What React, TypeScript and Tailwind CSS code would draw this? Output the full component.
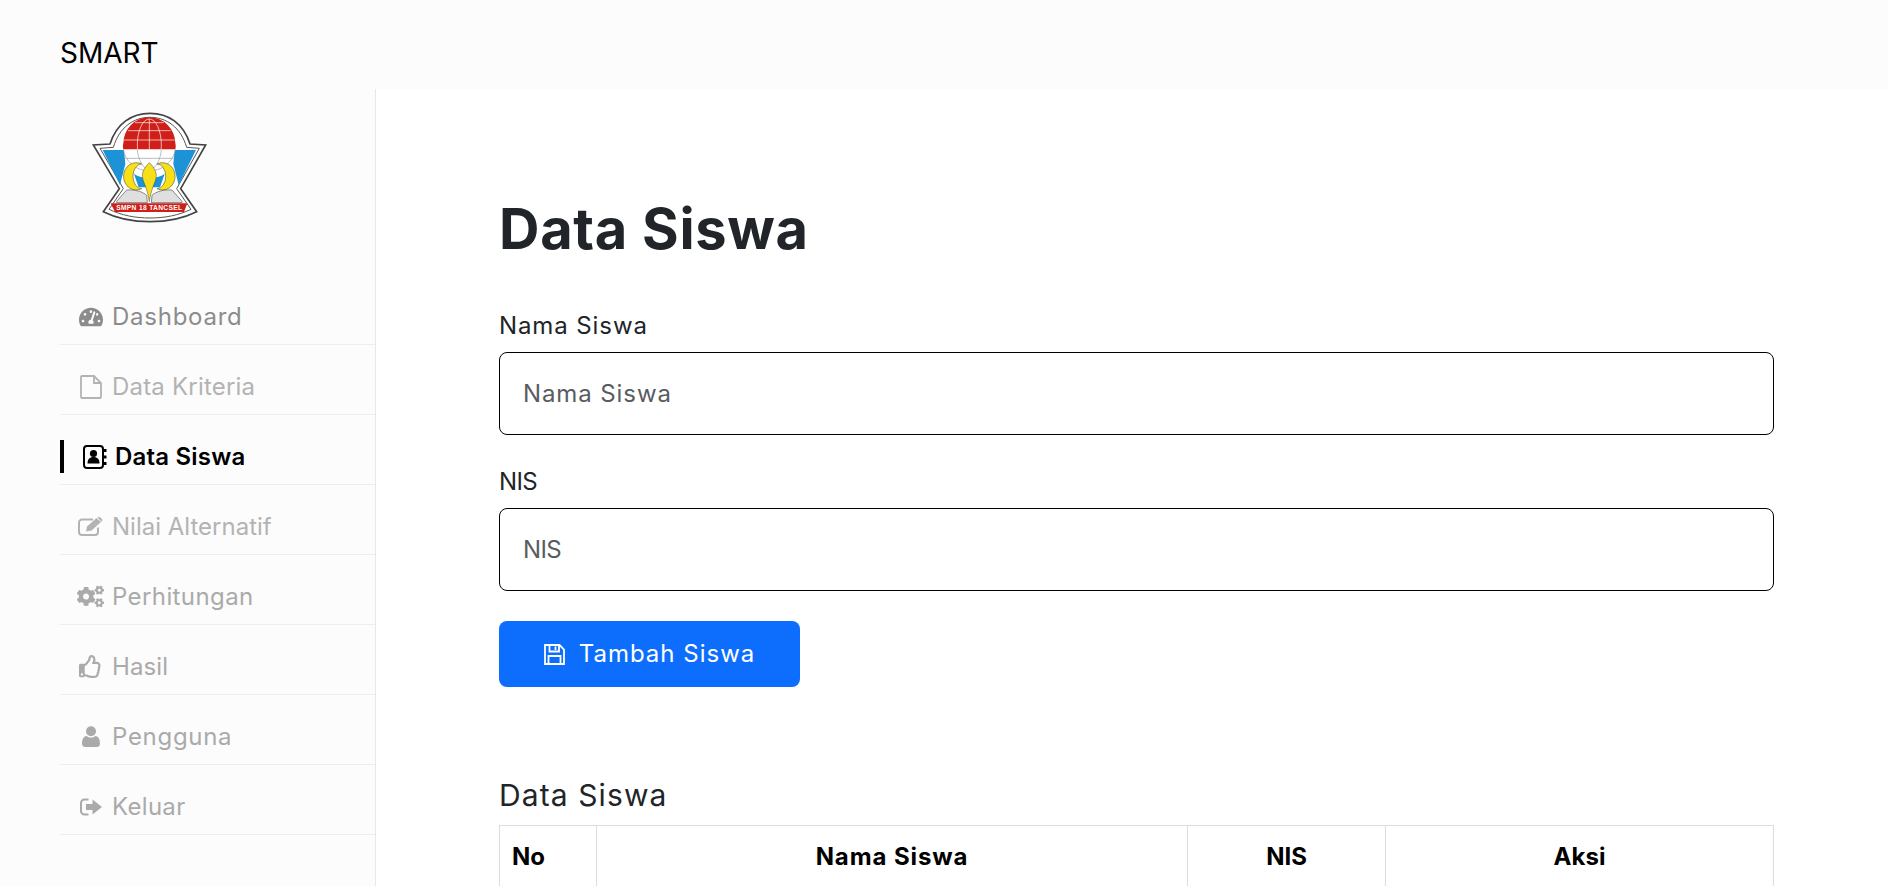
import { FaTachometerAlt, FaRegThumbsUp, FaCogs } from "react-icons/fa"

type IconProps = { className?: string }

function FileIcon({ className }: IconProps) {
  return (
    <svg viewBox="0 0 22 24" className={className} fill="none" stroke="currentColor" strokeWidth="1.8">
      <path d="M1 2a1 1 0 0 1 1-1h12l7 7v14a1 1 0 0 1-1 1H2a1 1 0 0 1-1-1z" />
      <path d="M14 1v7h7" />
    </svg>
  )
}

function AddressBookIcon({ className }: IconProps) {
  return (
    <svg viewBox="0 0 24 24" className={className} fill="currentColor">
      <rect x="1" y="1" width="19" height="22" rx="3" fill="none" stroke="currentColor" strokeWidth="2" />
      <circle cx="10.5" cy="8.5" r="3.6" />
      <path d="M4.5 18.5c0-4.2 2-6.5 6-6.5s6 2.3 6 6.5z" />
      <rect x="21" y="4" width="2.5" height="3" />
      <rect x="21" y="10.5" width="2.5" height="3" />
      <rect x="21" y="17" width="2.5" height="3" />
    </svg>
  )
}

function EditIcon({ className }: IconProps) {
  return (
    <svg viewBox="0 0 25 19" className={className} fill="currentColor">
      <path d="M15 2.5H4a3 3 0 0 0-3 3V15a3 3 0 0 0 3 3h13a3 3 0 0 0 3-3v-4.5" fill="none" stroke="currentColor" strokeWidth="2" />
      <path d="M8 14.5l1-5L18.5 1l4.5 4-9.5 8.5z" />
      <path d="M19.5.5l1-.5a1.5 1.5 0 0 1 1.5.3l2 1.8a1.5 1.5 0 0 1 0 1.9l-.5.7z" />
    </svg>
  )
}

function UserIcon({ className }: IconProps) {
  return (
    <svg viewBox="0 0 18 21" className={className} fill="currentColor">
      <circle cx="9" cy="5.2" r="5" />
      <path d="M0 17.5c0-4.5 1.800-7.500 4.800-7.500 1.100 1 2.600 1.700 4.200 1.700s3.100-.7 4.200-1.700c3 0 4.800 3 4.800 7.500 0 2.200-1.300 3.500-3 3.500H3c-1.700 0-3-1.300-3-3.500z" />
    </svg>
  )
}

function SignOutIcon({ className }: IconProps) {
  return (
    <svg viewBox="0 0 22 18" className={className} fill="currentColor">
      <path d="M8.500 1.500H4.500a3.500 3.500 0 0 0-3.500 3.500v8a3.500 3.500 0 0 0 3.500 3.500h4" fill="none" stroke="currentColor" strokeWidth="2" />
      <path d="M6 6h6.500V1.500L22 9l-9.500 7.500V12H6z" />
    </svg>
  )
}

function SaveIcon({ className }: IconProps) {
  return (
    <svg viewBox="0 0 21 21" className={className} fill="none" stroke="currentColor" strokeWidth="1.800">
      <path d="M1 1h14.500L20 5.500V20H1z" />
      <path d="M5.500 1v6.500H15V1" />
      <path d="M11.500 2.500v3.500" />
      <path d="M4.500 20v-8h12v8" />
    </svg>
  )
}

const menu = [
  { label: "Dashboard", icon: FaTachometerAlt, size: "w-[24px] h-[24px]", color: "text-[#8c8c8c]", spacing: "tracking-[0.75px]" },
  { label: "Data Kriteria", icon: FileIcon, size: "w-[22px] h-[24px]", color: "text-[#b3b3b3]", spacing: "tracking-[0.2px]" },
  { label: "Data Siswa", icon: AddressBookIcon, size: "w-[24px] h-[24px]", active: true },
  { label: "Nilai Alternatif", icon: EditIcon, size: "w-[25px] h-[19px]", color: "text-[#b3b3b3]", spacing: "tracking-[0px]" },
  { label: "Perhitungan", icon: FaCogs, size: "w-[27px] h-[27px]", color: "text-[#aaaaaa]", spacing: "tracking-[0.4px]" },
  { label: "Hasil", icon: FaRegThumbsUp, size: "w-[23px] h-[23px]", color: "text-[#aaaaaa]", spacing: "tracking-[0.1px]" },
  { label: "Pengguna", icon: UserIcon, size: "w-[18px] h-[21px]", color: "text-[#aaaaaa]", spacing: "tracking-[0.7px]" },
  { label: "Keluar", icon: SignOutIcon, size: "w-[22px] h-[18px]", color: "text-[#aaaaaa]", spacing: "tracking-[0.3px]" },
]

function Logo() {
  return (
    <svg viewBox="0 0 540 450" className="w-[180px] h-[150px] mt-[1px] block">
      {/* shield outline */}
      <path d="M150 162 C170 100 215 70 270 70 C325 70 370 100 390 162 L437 165 L362 296 L410 365 C370 385 320 395 270 395 C220 395 170 385 130 365 L178 296 L100 165 Z" fill="#fff" stroke="#444" strokeWidth="5" />
      <path d="M160 172 C178 112 220 82 270 82 C320 82 362 112 380 172 L418 175 L350 296 L393 358 C355 376 315 384 270 384 C225 384 185 376 147 358 L190 296 L120 175 Z" fill="#fff" stroke="#555" strokeWidth="3" />
      {/* blue wings */}
      <path d="M128 180 L192 180 L196 222 L180 285 Z" fill="#1c93d6" />
      <path d="M408 180 L344 180 L340 222 L356 285 Z" fill="#1c93d6" />
      {/* globe */}
      <circle cx="268" cy="165" r="78" fill="#fff" />
      <path d="M190 178 C188 170 189 165 190 160 A78 78 0 0 1 346 160 C347 165 348 170 346 178 Z" fill="#cf1f18" />
      <g fill="none" stroke="#fff" strokeWidth="2">
        <ellipse cx="268" cy="165" rx="36" ry="78" />
        <path d="M268 87 V178 M204 122 H332 M192 150 H344 M225 98 H311" />
      </g>
      <g fill="none" stroke="#9a9a9a" strokeWidth="2">
        <path d="M190 178 C195 215 230 243 268 243 C306 243 341 215 346 178 M232 178 C234 210 250 235 268 243 C286 235 302 210 304 178 M196 205 H340" />
      </g>
      {/* centre blue */}
      <path d="M222 252 C245 268 291 268 314 252 L300 292 L236 292 Z" fill="#1c93d6" />
      {/* crescents */}
      <path d="M245 222 A38 41 0 1 0 245 296 A24 34 0 1 1 245 222 Z" fill="#f7e018" stroke="#333" strokeWidth="1.500" />
      <path d="M291 222 A38 41 0 1 1 291 296 A24 34 0 1 0 291 222 Z" fill="#f7e018" stroke="#333" strokeWidth="1.500" />
      <path d="M268 218 C282 232 292 248 288 265 C284 282 274 295 268 335 C262 295 252 282 248 265 C244 248 254 232 268 218 Z" fill="#f7e018" stroke="#444" strokeWidth="1.500" />
      {/* book */}
      <path d="M170 334 L200 300 C225 298 248 305 260 316 L262 338 L170 338 Z" fill="#dfdfdf" stroke="#555" strokeWidth="2" />
      <path d="M366 334 L336 300 C311 298 288 305 276 316 L274 338 L366 338 Z" fill="#dfdfdf" stroke="#555" strokeWidth="2" />
      {/* banner */}
      <path d="M152 340 L382 340 L372 366 L165 366 Z" fill="#cf1f18" />
      <text x="268" y="360" textAnchor="middle" fill="#fff" fontSize="20" fontWeight="700" fontFamily="'Liberation Sans', sans-serif" letterSpacing="1">SMPN 18 TANCSEL</text>
    </svg>
  )
}

export default function App() {
  return (
    <div className="h-[886px] overflow-hidden bg-white font-['Inter',sans-serif] flex flex-col">
      <header className="h-[89px] shrink-0 bg-[#fcfcfc] pl-[60px] pt-[17px] flex items-center">
        <span className="text-[28px] text-black">SMART</span>
      </header>
      <div className="flex flex-1 min-h-0">
        <aside className="w-[376px] shrink-0 bg-[#fcfcfc] border-r border-[#e8e8e8] pl-[60px]">
          <Logo />
          <ul className="mt-[35px]">
            {menu.map((item) => {
              const Icon = item.icon
              return (
                <li key={item.label} className="h-[70px] pt-[14px] border-b border-[#eeeeee] flex items-center">
                  {item.active ? (
                    <div className="flex items-center h-[33px] border-l-4 border-black pl-[19px] gap-[8px] text-black font-semibold text-[24px] tracking-[0.2px]">
                      <Icon className={item.size} />
                      <span>{item.label}</span>
                    </div>
                  ) : (
                    <div className={`flex items-center pl-[18px] gap-[9px] text-[24px] ${item.color} ${item.spacing}`}>
                      <span className="w-[25px] flex justify-center">
                        <Icon className={`${item.size} shrink-0`} />
                      </span>
                      <span>{item.label}</span>
                    </div>
                  )}
                </li>
              )
            })}
          </ul>
        </aside>
        <main className="flex-1 min-w-0 pl-[123px] pr-[114px]">
          <h1 className="mt-[103px] text-[56px] leading-[74px] font-bold text-[#212529] tracking-[0.7px]">Data Siswa</h1>
          <form className="mt-[42px]">
            <label className="block text-[24px] leading-[36px] text-[#212529] tracking-[0.9px]">Nama Siswa</label>
            <input placeholder="Nama Siswa" className="mt-[8px] block w-full h-[83px] px-[23px] rounded-[8px] border border-black text-[24px] tracking-[0.9px] bg-white placeholder:text-[#595c5f]" />
            <label className="block mt-[29px] text-[24px] leading-[36px] text-[#212529] tracking-[-0.6px]">NIS</label>
            <input placeholder="NIS" className="mt-[8px] block w-full h-[83px] px-[23px] rounded-[8px] border border-black text-[24px] tracking-[-0.6px] bg-white placeholder:text-[#595c5f]" />
            <button type="button" className="mt-[30px] w-[301px] h-[66px] rounded-[8px] bg-[#0d6efd] text-white text-[24px] tracking-[1px] flex items-center justify-center gap-[14px]">
              <SaveIcon className="w-[21px] h-[21px]" />
              Tambah Siswa
            </button>
          </form>
          <h2 className="mt-[90px] text-[30px] leading-[36px] text-[#212529] tracking-[1.1px]">Data Siswa</h2>
          <table className="mt-[12px] w-full table-fixed border-collapse text-[24px] text-black">
            <thead>
              <tr className="h-[62px]">
                <th className="w-[97px] border border-[#dddddd] text-left pl-[12px] font-bold">No</th>
                <th className="w-[591px] border border-[#dddddd] font-bold tracking-[0.9px]">Nama Siswa</th>
                <th className="w-[198px] border border-[#dddddd] font-bold">NIS</th>
                <th className="border border-[#dddddd] font-bold">Aksi</th>
              </tr>
            </thead>
          </table>
        </main>
      </div>
    </div>
  )
}
